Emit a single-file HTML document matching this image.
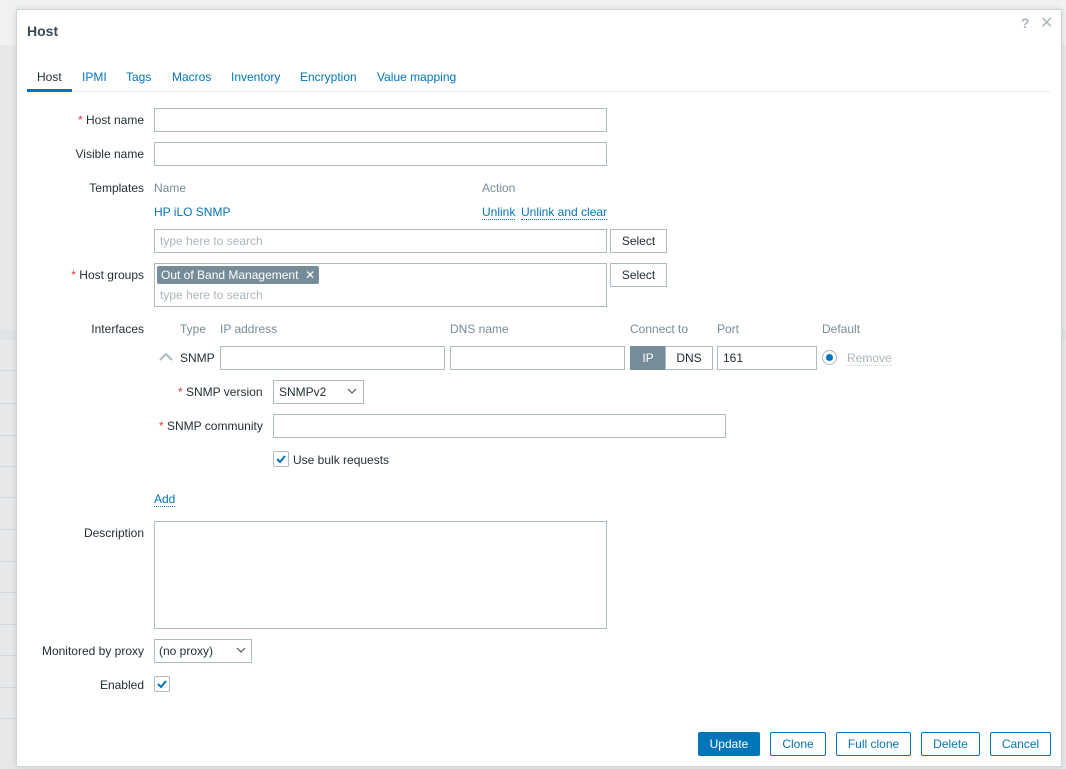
<!DOCTYPE html>
<html><head><meta charset="utf-8"><style>
*{box-sizing:border-box;margin:0;padding:0}
body{width:1066px;height:769px;overflow:hidden;background:#e6e8ea;font-family:"Liberation Sans",Arial,sans-serif;font-size:12px;color:#1f2c33;position:relative}
.a{position:absolute;line-height:14px;white-space:nowrap}
.lbl{position:absolute;right:922px;line-height:14px;white-space:nowrap;text-align:right}
.req:before{content:"* ";color:#e33734}
.in{position:absolute;height:24px;border:1px solid #acbbc2;background:#fff}
.btn{position:absolute;height:24px;border:1px solid #acbbc2;background:#fff;text-align:center;line-height:22px;color:#1f2c33}
.lnk{color:#0275b8}
.dot{border-bottom:1px dotted #0275b8}
.gray{color:#768d99}
.ph{color:#aab7bd}
.pb{position:absolute;height:24px;border:1px solid #0275b8;background:#fff;color:#0275b8;text-align:center;line-height:22px;border-radius:2px}
.cb{position:absolute;width:16px;height:16px;border:1px solid #acbbc2;background:#fff;border-radius:2px}
.row{position:absolute;left:0;width:17px;height:1px;background:#d3d8db}
</style></head><body>
<div style="position:absolute;left:0;top:0;width:1066px;height:45px;background:#f0f1f2"></div>
<div style="position:absolute;left:0;top:330px;width:1066px;height:10px;background:#dfe3e5"></div>
<div class="row" style="top:370px"></div><div class="row" style="top:403px"></div><div class="row" style="top:435px"></div><div class="row" style="top:466px"></div><div class="row" style="top:497px"></div><div class="row" style="top:529px"></div><div class="row" style="top:561px"></div><div class="row" style="top:592px"></div><div class="row" style="top:624px"></div><div class="row" style="top:655px"></div><div class="row" style="top:687px"></div><div class="row" style="top:718px"></div>

<div style="position:absolute;left:16px;top:9px;width:1046px;height:758px;background:#fff;border:1px solid #ccd5d9;box-shadow:0 0 6px rgba(0,0,0,.12)"></div>

<div class="a" style="left:27px;top:23px;font-size:14px;font-weight:bold;color:#384a55;line-height:16px">Host</div>
<div class="a" style="left:1021px;top:16px;font-size:14px;color:#aab7bd;font-weight:bold">?</div>
<div class="a" style="left:1040px;top:17px;font-size:16px;color:#aab7bd">✕</div>

<div class="a" style="left:37px;top:70px">Host</div>
<div class="a lnk" style="left:82px;top:70px">IPMI</div>
<div class="a lnk" style="left:126px;top:70px">Tags</div>
<div class="a lnk" style="left:172px;top:70px">Macros</div>
<div class="a lnk" style="left:231px;top:70px">Inventory</div>
<div class="a lnk" style="left:300px;top:70px">Encryption</div>
<div class="a lnk" style="left:377px;top:70px">Value mapping</div>
<div style="position:absolute;left:27px;top:91px;width:1023px;height:1px;background:#ebeef0"></div>
<div style="position:absolute;left:27px;top:89px;width:45px;height:3px;background:#0275b8"></div>

<div class="lbl req" style="top:113px">Host name</div>
<div class="in" style="left:154px;top:108px;width:453px"></div>
<div class="lbl" style="top:147px">Visible name</div>
<div class="in" style="left:154px;top:142px;width:453px"></div>

<div class="lbl" style="top:181px">Templates</div>
<div class="a gray" style="left:154px;top:181px">Name</div>
<div class="a gray" style="left:482px;top:181px">Action</div>
<div class="a lnk" style="left:154px;top:205px">HP iLO SNMP</div>
<div class="a lnk dot" style="left:482px;top:205px">Unlink</div>
<div class="a lnk dot" style="left:521px;top:205px">Unlink and clear</div>
<div class="in" style="left:154px;top:229px;width:453px"></div>
<div class="a ph" style="left:160px;top:234px">type here to search</div>
<div class="btn" style="left:610px;top:229px;width:57px">Select</div>

<div class="lbl req" style="top:268px">Host groups</div>
<div class="in" style="left:154px;top:263px;width:453px;height:44px"></div>
<div class="a" style="left:157px;top:266px;height:18px;width:162px;background:#768d99;color:#fff;border-radius:2px;line-height:18px;padding-left:4px">Out of Band Management&nbsp;&nbsp;✕</div>
<div class="a ph" style="left:160px;top:288px">type here to search</div>
<div class="btn" style="left:610px;top:263px;width:57px">Select</div>

<div class="lbl" style="top:322px">Interfaces</div>
<div class="a gray" style="left:180px;top:322px">Type</div>
<div class="a gray" style="left:220px;top:322px">IP address</div>
<div class="a gray" style="left:450px;top:322px">DNS name</div>
<div class="a gray" style="left:630px;top:322px">Connect to</div>
<div class="a gray" style="left:717px;top:322px">Port</div>
<div class="a gray" style="left:822px;top:322px">Default</div>
<svg style="position:absolute;left:159px;top:352px" width="14" height="10"><path d="M1 8 L7 2 L13 8" stroke="#acbbc2" stroke-width="2" fill="none"/></svg>
<div class="a" style="left:180px;top:351px">SNMP</div>
<div class="in" style="left:220px;top:346px;width:225px"></div>
<div class="in" style="left:450px;top:346px;width:175px"></div>
<div class="a" style="left:630px;top:346px;width:36px;height:24px;background:#768d99;color:#fff;text-align:center;line-height:24px">IP</div>
<div class="btn" style="left:665px;top:346px;width:48px">DNS</div>
<div class="in" style="left:717px;top:346px;width:100px"></div>
<div class="a" style="left:723px;top:351px">161</div>
<div style="position:absolute;left:822px;top:350px;width:15px;height:15px;border:1px solid #acbbc2;border-radius:50%;background:#fff"><div style="position:absolute;left:3px;top:3px;width:7px;height:7px;border-radius:50%;background:#0275b8"></div></div>
<div class="a ph" style="left:847px;top:351px;border-bottom:1px dotted #ccd5d9">Remove</div>

<div class="a req" style="left:178px;top:385px">SNMP version</div>
<div class="in" style="left:273px;top:380px;width:91px"></div>
<div class="a" style="left:279px;top:385px">SNMPv2</div>
<svg style="position:absolute;left:347px;top:388px" width="10" height="7"><path d="M1 1 L5 5 L9 1" stroke="#555" stroke-width="1.2" fill="none"/></svg>
<div class="a req" style="left:159px;top:419px">SNMP community</div>
<div class="in" style="left:273px;top:414px;width:453px"></div>
<div class="cb" style="left:273px;top:451px"></div>
<svg style="position:absolute;left:275px;top:453px" width="12" height="12"><path d="M2 6 L5 9 L10 3" stroke="#0275b8" stroke-width="2" fill="none"/></svg>
<div class="a" style="left:293px;top:453px">Use bulk requests</div>

<div class="a lnk dot" style="left:154px;top:492px">Add</div>

<div class="lbl" style="top:526px">Description</div>
<div class="in" style="left:154px;top:521px;width:453px;height:108px"></div>

<div class="lbl" style="top:644px">Monitored by proxy</div>
<div class="in" style="left:154px;top:639px;width:98px"></div>
<div class="a" style="left:159px;top:644px">(no proxy)</div>
<svg style="position:absolute;left:236px;top:647px" width="10" height="7"><path d="M1 1 L5 5 L9 1" stroke="#555" stroke-width="1.2" fill="none"/></svg>
<div class="lbl" style="top:678px">Enabled</div>
<div class="cb" style="left:154px;top:676px"></div>
<svg style="position:absolute;left:156px;top:678px" width="12" height="12"><path d="M2 6 L5 9 L10 3" stroke="#0275b8" stroke-width="2" fill="none"/></svg>

<div class="a" style="left:698px;top:732px;width:62px;height:24px;background:#0275b8;color:#fff;text-align:center;line-height:24px;border-radius:2px">Update</div>
<div class="pb" style="left:770px;top:732px;width:56px">Clone</div>
<div class="pb" style="left:836px;top:732px;width:75px">Full clone</div>
<div class="pb" style="left:921px;top:732px;width:59px">Delete</div>
<div class="pb" style="left:990px;top:732px;width:61px">Cancel</div>
</body></html>
